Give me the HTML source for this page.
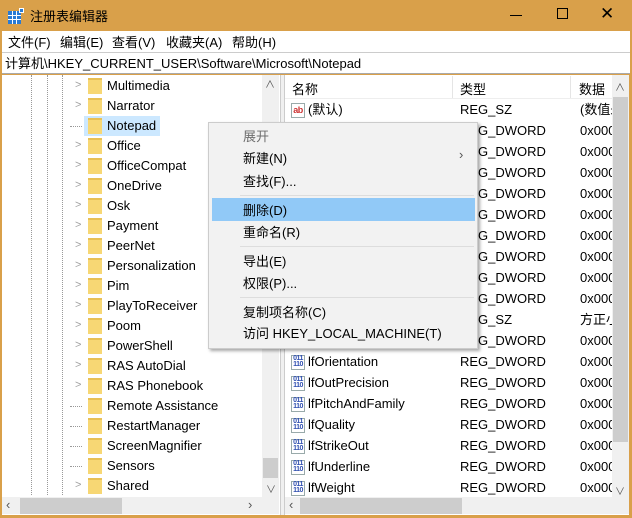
<!DOCTYPE html><html><head><meta charset="utf-8"><style>
*{margin:0;padding:0;box-sizing:border-box}
body{width:632px;height:518px;overflow:hidden;background:#d9a04a;font-family:"Liberation Sans","Noto Sans CJK SC",sans-serif;font-size:13px;color:#000;position:relative}
.a{position:absolute;white-space:nowrap}
.t{position:absolute;white-space:nowrap;line-height:20px}
.fold{position:absolute;width:14px;height:16px;background:#f7d774;border-top:2px solid #e8c055}
.chev{position:absolute;color:#a0a0a0;font-size:11px}
.ic{position:absolute;width:14px;height:15px;border:1px solid #9aa;background:#fff;font-size:7px;line-height:6px;color:#2f4fb0;font-weight:bold;text-align:center;letter-spacing:-0.5px}
.dot{position:absolute;border-left:1px dotted #999}
</style></head><body>
<div class="a" style="left:8px;top:8px;width:16px;height:16px">
<div style="position:absolute;left:0;top:3px;width:13px;height:13px;background:#2a7bd4"></div>
<div style="position:absolute;left:4px;top:3px;width:1px;height:13px;background:#fff"></div>
<div style="position:absolute;left:8px;top:3px;width:1px;height:13px;background:#fff"></div>
<div style="position:absolute;left:0;top:7px;width:13px;height:1px;background:#fff"></div>
<div style="position:absolute;left:0;top:11px;width:13px;height:1px;background:#fff"></div>
<div style="position:absolute;left:11px;top:0;width:5px;height:5px;background:#2a7bd4;border:1px solid #fff"></div>
</div>
<div class="a" style="left:30px;top:6px;font-size:13px">注册表编辑器</div>
<div class="a" style="left:510px;top:15px;width:12px;height:1px;background:#000"></div>
<div class="a" style="left:557px;top:8px;width:11px;height:11px;border:1px solid #000"></div>
<div class="a" style="left:600px;top:4px;font-size:17px">✕</div>
<div class="a" style="left:2px;top:31px;width:628px;height:21px;background:#fff"></div>
<div class="a" style="left:8px;top:32px">文件(F)</div>
<div class="a" style="left:60px;top:32px">编辑(E)</div>
<div class="a" style="left:112px;top:32px">查看(V)</div>
<div class="a" style="left:166px;top:32px">收藏夹(A)</div>
<div class="a" style="left:232px;top:32px">帮助(H)</div>
<div class="a" style="left:2px;top:52px;width:628px;height:22px;background:#fff;border-top:1px solid #ccc;border-bottom:1px solid #aaa"></div>
<div class="a" style="left:5px;top:53px">计算机\HKEY_CURRENT_USER\Software\Microsoft\Notepad</div>
<div class="a" style="left:2px;top:75px;width:278px;height:440px;background:#fff"></div>
<div class="dot" style="left:31px;top:75px;height:420px"></div>
<div class="dot" style="left:47px;top:75px;height:420px"></div>
<div class="dot" style="left:62px;top:75px;height:420px"></div>
<div class="a" style="left:84px;top:116px;width:76px;height:20px;background:#cce8ff"></div>
<div id="tree"></div>
<div class="a" style="left:262px;top:75px;width:17px;height:422px;background:#f0f0f0"></div>
<div class="a" style="left:265px;top:76px;color:#555;font-size:10px">∧</div>
<div class="a" style="left:263px;top:458px;width:15px;height:20px;background:#cdcdcd"></div>
<div class="a" style="left:266px;top:481px;color:#555;font-size:10px">∨</div>
<div class="a" style="left:2px;top:497px;width:277px;height:17px;background:#f0f0f0"></div>
<div class="a" style="left:20px;top:498px;width:102px;height:16px;background:#cdcdcd"></div>
<div class="a" style="left:6px;top:497px;color:#555">‹</div>
<div class="a" style="left:248px;top:497px;color:#555">›</div>
<div class="a" style="left:280px;top:75px;width:5px;height:440px;background:#f0f0f0;border-left:1px solid #ccc;border-right:1px solid #ccc"></div>
<div class="a" style="left:285px;top:75px;width:344px;height:440px;background:#fff"></div>
<div class="a" style="left:285px;top:75px;width:327px;height:24px;border-bottom:1px solid #eee"></div>
<div class="a" style="left:452px;top:76px;width:1px;height:22px;background:#e5e5e5"></div>
<div class="a" style="left:570px;top:76px;width:1px;height:22px;background:#e5e5e5"></div>
<div class="a" style="left:292px;top:79px">名称</div>
<div class="a" style="left:460px;top:79px">类型</div>
<div class="a" style="left:579px;top:79px">数据</div>
<div id="list"></div>
<div class="a" style="left:612px;top:75px;width:17px;height:422px;background:#f0f0f0"></div>
<div class="a" style="left:615px;top:79px;color:#555;font-size:10px">∧</div>
<div class="a" style="left:613px;top:97px;width:15px;height:345px;background:#cdcdcd"></div>
<div class="a" style="left:615px;top:483px;color:#555;font-size:10px">∨</div>
<div class="a" style="left:285px;top:497px;width:344px;height:17px;background:#f0f0f0"></div>
<div class="a" style="left:300px;top:498px;width:162px;height:16px;background:#cdcdcd"></div>
<div class="a" style="left:289px;top:497px;color:#555">‹</div>
<div class="a" style="left:208px;top:122px;width:270px;height:227px;background:#f2f2f2;border:1px solid #ccc;box-shadow:2px 2px 3px rgba(0,0,0,.35)"></div>
<div class="a" style="left:212px;top:198px;width:263px;height:23px;background:#91c9f7"></div>
<div class="a" style="left:240px;top:195px;width:234px;height:1px;background:#ddd"></div>
<div class="a" style="left:240px;top:246px;width:234px;height:1px;background:#ddd"></div>
<div class="a" style="left:240px;top:297px;width:234px;height:1px;background:#ddd"></div>
<div class="a" style="left:243px;top:126px;color:#6d6d6d">展开</div>
<div class="a" style="left:243px;top:148px">新建(N)</div>
<div class="a" style="left:459px;top:147px;color:#555">›</div>
<div class="a" style="left:243px;top:171px">查找(F)...</div>
<div class="a" style="left:243px;top:200px">删除(D)</div>
<div class="a" style="left:243px;top:222px">重命名(R)</div>
<div class="a" style="left:243px;top:251px">导出(E)</div>
<div class="a" style="left:243px;top:273px">权限(P)...</div>
<div class="a" style="left:243px;top:302px">复制项名称(C)</div>
<div class="a" style="left:243px;top:323px">访问 HKEY_LOCAL_MACHINE(T)</div>
<script>
var t=["Multimedia","Narrator","Notepad","Office","OfficeCompat","OneDrive","Osk","Payment","PeerNet","Personalization","Pim","PlayToReceiver","Poom","PowerShell","RAS AutoDial","RAS Phonebook","Remote Assistance","RestartManager","ScreenMagnifier","Sensors","Shared"];
var noch={"Notepad":1,"Remote Assistance":1,"RestartManager":1,"ScreenMagnifier":1,"Sensors":1};
var h="";
t.forEach(function(n,i){var y=76+i*20;
if(!noch[n])h+='<div class="chev" style="left:75px;top:'+(y+3)+'px">&gt;</div>';else h+='<div class="dot" style="left:70px;top:'+(y+10)+'px;width:12px;height:0;border-left:0;border-top:1px dotted #999"></div>';
h+='<div class="fold" style="left:88px;top:'+(y+2)+'px"></div><div class="t" style="left:107px;top:'+y+'px">'+n+'</div>';});
document.getElementById('tree').innerHTML=h;
var r=[["(默认)","REG_SZ","(数值未"]];
for(var i=0;i<9;i++)r.push(["","REG_DWORD","0x000"]);
r.push(["","REG_SZ","方正小"]);r.push(["","REG_DWORD","0x000"]);
["lfOrientation","lfOutPrecision","lfPitchAndFamily","lfQuality","lfStrikeOut","lfUnderline","lfWeight"].forEach(function(n){r.push([n,"REG_DWORD","0x000"])});
h="";
r.forEach(function(e,i){var y=100+i*21;
if(i==0)h+='<div class="ic" style="left:291px;top:'+(y+3)+'px;color:#c33;font-size:9px;line-height:12px">ab</div>';
else h+='<div class="ic" style="left:291px;top:'+(y+3)+'px">011<br>110</div>';
h+='<div class="t" style="left:308px;top:'+y+'px">'+e[0]+'</div><div class="t" style="left:460px;top:'+y+'px">'+e[1]+'</div><div class="t" style="left:580px;top:'+y+'px;width:32px;overflow:hidden">'+e[2]+'</div>';});
document.getElementById('list').innerHTML=h;
</script>
</body></html>
